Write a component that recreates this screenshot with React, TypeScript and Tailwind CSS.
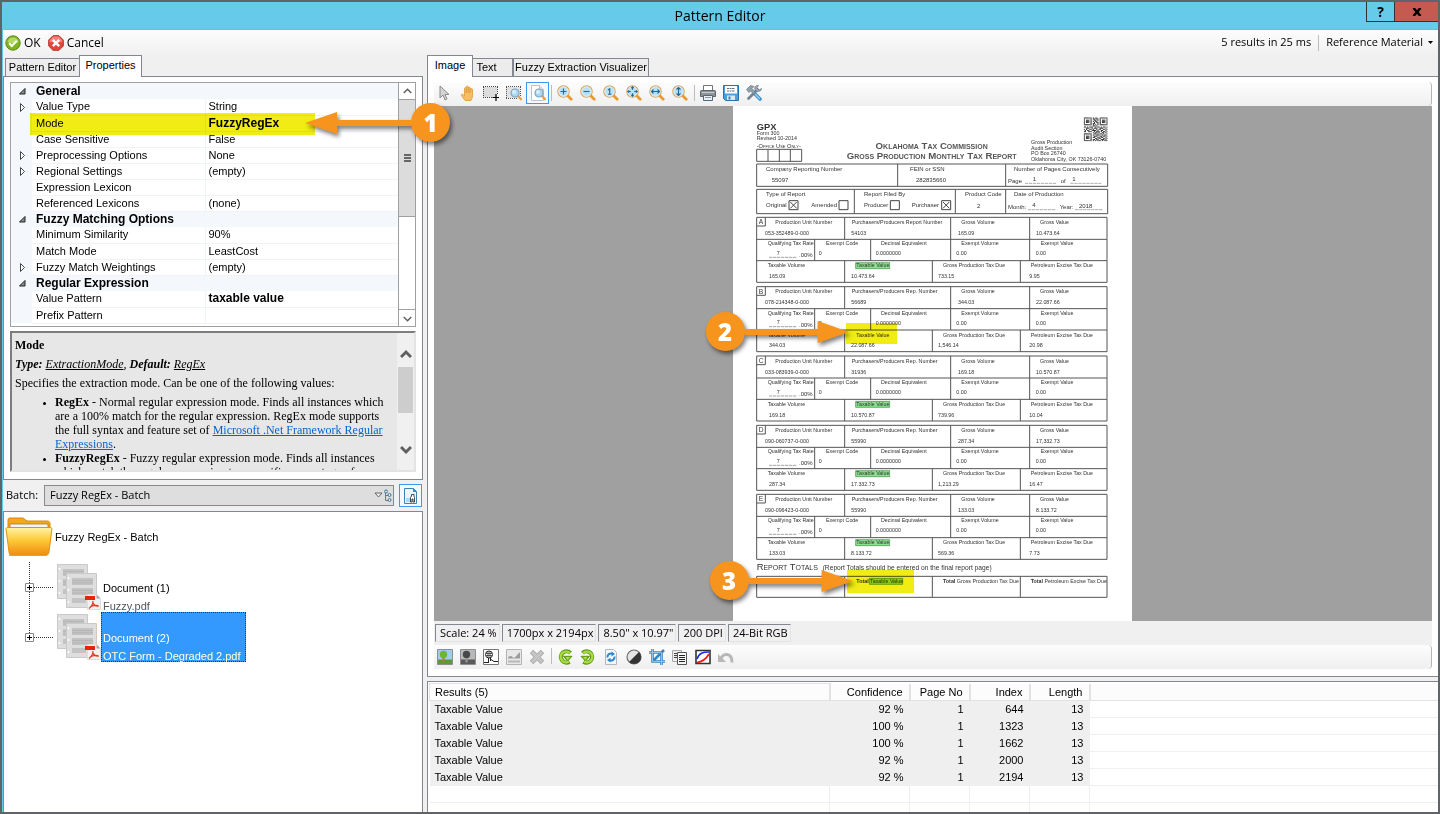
import type { ReactNode } from "react";
import { clsx } from "clsx";

type Property = {
    name: string;
    value?: string;
    kind?: "category" | "expandable";
    bold?: boolean;
};

const properties: Property[] = [
    { name: "General", kind: "category" },
    { name: "Value Type", value: "String", kind: "expandable" },
    { name: "Mode", value: "FuzzyRegEx", bold: true },
    { name: "Case Sensitive", value: "False" },
    { name: "Preprocessing Options", value: "None", kind: "expandable" },
    { name: "Regional Settings", value: "(empty)", kind: "expandable" },
    { name: "Expression Lexicon", value: "" },
    { name: "Referenced Lexicons", value: "(none)" },
    { name: "Fuzzy Matching Options", kind: "category" },
    { name: "Minimum Similarity", value: "90%" },
    { name: "Match Mode", value: "LeastCost" },
    { name: "Fuzzy Match Weightings", value: "(empty)", kind: "expandable" },
    { name: "Regular Expression", kind: "category" },
    { name: "Value Pattern", value: "taxable value", bold: true },
    { name: "Prefix Pattern", value: "" },
];

const results = [
    { confidence: "92 %", page: 1, index: 644, length: 13 },
    { confidence: "100 %", page: 1, index: 1323, length: 13 },
    { confidence: "100 %", page: 1, index: 1662, length: 13 },
    { confidence: "92 %", page: 1, index: 2000, length: 13 },
    { confidence: "92 %", page: 1, index: 2194, length: 13 },
];

const sections = [
    { id: "A", y: 334, purchaser: "Report", top: ["053-352489-0-000", "54103", "165.09", "10.473.64"], bottom: ["165.09", "10.473.64", "733.15", "9.95"] },
    { id: "B", y: 542, purchaser: "Rep.", top: ["078-214348-0-000", "56689", "344.03", "22.087.66"], bottom: ["344.03", "22.087.66", "1,546.14", "20.98"] },
    { id: "C", y: 750, purchaser: "Rep.", top: ["033-083939-0-000", "31936", "169.18", "10.570.87"], bottom: ["169.18", "10.570.87", "739.96", "10.04"] },
    { id: "D", y: 958, purchaser: "Rep.", top: ["090-060737-0-000", "55990", "287.34", "17,332.73"], bottom: ["287.34", "17.332.73", "1,213.29", "16.47"] },
    { id: "E", y: 1165, purchaser: "Rep.", top: ["090-096423-0-000", "55990", "133.03", "8.133.72"], bottom: ["133.03", "8.133.72", "569.36", "7.73"] },
];

const statusItems = ["Scale: 24 %", "1700px x 2194px", "8.50\" x 10.97\"", "200 DPI", "24-Bit RGB"];

/* ---------- icons ---------- */

function Icon({ children, size = "size-4" }: { children: ReactNode; size?: string }) {
    return (
        <svg viewBox="0 0 16 16" className={clsx("shrink-0", size)} fill="none" aria-hidden="true">
            {children}
        </svg>
    );
}

function OkIcon() {
    return (
        <Icon>
            <circle cx="8" cy="8" r="7.2" fill="#7fb51c" stroke="#5b8a1a" />
            <path d="M2.5 7a5.6 5.6 0 0 1 11 0c-3 1.6-8 1.6-11 0z" fill="#b2d962" />
            <path d="M4.2 8.2l2.6 2.7 5-5.2" stroke="#fff" strokeWidth="2.2" />
        </Icon>
    );
}

function CancelIcon() {
    return (
        <Icon>
            <path d="M5 .7h6L15.3 5v6L11 15.3H5L.7 11V5z" fill="#e4463b" stroke="#b8352b" />
            <path d="M5.2 1.5h5.6l3.4 3.7v2H1.8v-2z" fill="#f08478" />
            <path d="M4.800 4.800l6.400 6.400M11.200 4.800l-6.400 6.400" stroke="#fff" strokeWidth="2.4" />
        </Icon>
    );
}

function PointerIcon() {
    return (
        <Icon>
            <path d="M3 1v12l3-3 2 5 2-1-2-4.500h4z" fill="#d4d4d4" stroke="#8b8b8b" strokeWidth="1" />
        </Icon>
    );
}

function HandIcon() {
    return (
        <Icon>
            <path
                d="M5 15.500l-3.500-5c-.6-1 .6-1.800 1.400-1l1.600 1.500V3.500c0-1.200 1.700-1.200 1.800 0V2c0-1.200 1.800-1.200 1.900 0v1c.1-1.200 1.800-1.200 1.900 0v1.500c.1-1.200 2.300-1.200 2.400 0V10.500c0 2.500-1 3.500-1.500 5z"
                fill="#f6bd62"
                stroke="#dc9838"
                strokeWidth=".8"
            />
            <path d="M6.300 4v4M8.200 3v5M10.100 4v4" stroke="#d28a2e" strokeWidth=".7" />
        </Icon>
    );
}

function MarqueeIcon() {
    return (
        <Icon>
            <path d="M0 2h14v10H0z" fill="#dcdcdc" />
            <path d="M0 1.500h15M0 12.500h11M.5 2v10M14.500 2v7" stroke="#444" strokeDasharray="1 1" />
            <path d="M13 9v7M9.500 12.500h7" stroke="#000" strokeWidth="1.200" />
        </Icon>
    );
}

function Lens() {
    return (
        <>
            <path d="M12 11l3 3.200" stroke="#e9a04a" strokeWidth="2.400" strokeLinecap="round" />
            <circle cx="9" cy="8" r="4" fill="#a9d8f3" stroke="#7fa6bd" strokeWidth="1.200" />
            <circle cx="8" cy="7" r="2" fill="#d6eefb" />
        </>
    );
}

function ZoomRegionIcon() {
    return (
        <Icon>
            <path d="M0 2h14v11H0z" fill="#e2e2e2" />
            <path d="M0 1.500h15M0 13.500h11M.5 2v11M14.500 2v9" stroke="#555" strokeDasharray="1 1" />
            <Lens />
        </Icon>
    );
}

function ZoomPageIcon() {
    return (
        <Icon>
            <path d="M1.500.5h8l4 4v11h-12z" fill="#fff" stroke="#c0c0c0" />
            <path d="M9.500.5v4h4" fill="#e6e6e6" stroke="#c0c0c0" />
            <Lens />
        </Icon>
    );
}

function ZoomIcon({ glyph }: { glyph: string }) {
    return (
        <Icon>
            <path d="M11 11l3.200 3.200" stroke="#ea9a2c" strokeWidth="2.800" strokeLinecap="round" />
            <circle cx="6.500" cy="6.500" r="5.700" fill="#b4e1f7" stroke="#dfa04e" strokeWidth="1.100" />
            <circle cx="6.500" cy="6.500" r="4.700" stroke="#e6f6fd" strokeWidth=".8" />
            <path d={glyph} stroke="#2b6491" strokeWidth="1.100" />
        </Icon>
    );
}

const zoomGlyphs = [
    { label: "Zoom in", d: "M6.500 3.500v6M3.500 6.500h6" },
    { label: "Zoom out", d: "M3.500 6.500h6" },
    { label: "Actual size", d: "M5 5l1.700-1.200v5.700M5 9.300h3.400" },
    { label: "Fit page", d: "M6.500 1.800v3M5.300 3l1.200-1.200L7.700 3M6.500 8.200v3M5.300 10l1.200 1.200L7.700 10M1.800 6.500h3M3 5.300L1.800 6.500 3 7.700M8.200 6.500h3M10 5.300l1.200 1.200L10 7.700" },
    { label: "Fit width", d: "M2.500 6.500h8M4.500 4.500l-2 2 2 2M8.500 4.500l2 2-2 2" },
    { label: "Fit height", d: "M6.500 2.500v8M4.500 4.500l2-2 2 2M4.500 8.500l2 2 2-2" },
];

function PrinterIcon() {
    return (
        <Icon>
            <path d="M3.500.5h9v5h-9z" fill="#fff" stroke="#6d7580" />
            <path d="M1.500 5.500h13c.6 0 1 .4 1 1v5H.5v-5c0-.6.4-1 1-1z" fill="#8d949c" stroke="#5d646d" />
            <path d="M2 7.500h12" stroke="#c8ced4" />
            <path d="M3.500 10.500h9v5h-9z" fill="#e6f1fa" stroke="#5d646d" />
            <path d="M5 12.500h6" stroke="#6ea4d1" />
        </Icon>
    );
}

function SaveIcon() {
    return (
        <Icon>
            <path d="M.5.5h15v15h-13l-2-2z" fill="#4a9fdb" stroke="#2274b0" />
            <path d="M2 1h12v7.500H2z" fill="#fff" />
            <path d="M4 3.500h8M4 6h8" stroke="#64707a" strokeDasharray="2 .5" />
            <path d="M4 10.500h8v4.500H4z" fill="#dbe7ef" />
            <path d="M5.500 11.500h2v3h-2z" fill="#2e86c6" />
        </Icon>
    );
}

function ToolsIcon() {
    return (
        <Icon>
            <path d="M2.500 13.500l9-9" stroke="#73838f" strokeWidth="2.800" strokeLinecap="round" />
            <path d="M15.500 3.500l-2.600 1.600-2-2L12.500.5c-2.200-.4-4.200 1-3.800 3.300.3 1.700 2 3 3.700 2.700 2-.3 3.300-1.500 3.100-3z" fill="#9cabb7" stroke="#5d6c79" strokeWidth=".6" />
            <path d="M9.500 9.500l4.500 4.500" stroke="#3b94d4" strokeWidth="3.600" strokeLinecap="round" />
            <path d="M9.500 9.500l4 4" stroke="#9fd2f2" strokeWidth="1.200" strokeLinecap="round" />
            <path d="M.5 4.500L4.500.5l3.500 1L6 3.500l1 1L9.500 8 8 9.500 4.500 6 3 7.500z" fill="#8fa0ad" stroke="#5d6c79" strokeWidth=".6" />
        </Icon>
    );
}

function PictureIcon({ sky, ground, tree, trunk }: { sky: string; ground: string; tree: string; trunk: string }) {
    return (
        <Icon>
            <path d="M.5.5h15v15H.5z" fill={sky} stroke="#8a8f94" />
            <path d="M1 10.500h14V15H1z" fill={ground} />
            <path d="M5.500 8h2v5.500h-2z" fill={trunk} />
            <circle cx="6.500" cy="5.500" r="3.700" fill={tree} />
        </Icon>
    );
}

function BinaryPictureIcon() {
    return (
        <Icon>
            <path d="M.5.5h15v15H.5z" fill="#fff" stroke="#777" />
            <circle cx="6" cy="5.500" r="3.500" stroke="#222" />
            <path d="M3 4.500h6M3 6.500h6M5 2.500v6M7 2.500v6" stroke="#222" strokeWidth=".7" />
            <path d="M5.500 9v4M7.500 9v3M1 13.500h5M8 10.500l3 2h4" stroke="#222" />
        </Icon>
    );
}

function ThresholdIcon() {
    return (
        <Icon>
            <path d="M.5.5h15v15H.5z" fill="#e8e8e8" stroke="#b4b4b4" />
            <path d="M2 8.500c2-2 3-2 5 0s5-5 7-5v6H2z" fill="#9c9c9c" />
            <path d="M2 12.500h12" stroke="#b8b8b8" strokeWidth="2" />
        </Icon>
    );
}

function DeleteIcon() {
    return (
        <Icon>
            <path d="M2.500 2.500l11 11M13.500 2.500l-11 11" stroke="#a6a6a6" strokeWidth="4.800" />
            <path d="M3 3l10 10M13 3L3 13" stroke="#c4c4c4" strokeWidth="3.200" />
        </Icon>
    );
}

function RotateIcon({ flip = false }: { flip?: boolean }) {
    return (
        <Icon>
            <g transform={flip ? "translate(16 0) scale(-1 1)" : undefined}>
                <path d="M13.500 4A5.600 5.600 0 1 0 12.500 12.700" stroke="#5f9a12" strokeWidth="4.200" />
                <path d="M6.500 7.300h8.500L10.500 12z" fill="#5f9a12" stroke="#5f9a12" />
                <path d="M12.800 4.200A5.300 5.300 0 1 0 11.800 12.400" stroke="#a9dd42" strokeWidth="2.400" />
                <path d="M8.500 8h4.700l-2.700 2.900z" fill="#a9dd42" />
            </g>
        </Icon>
    );
}

function RefreshPageIcon() {
    return (
        <Icon>
            <path d="M2.500.5h8l3 3v12h-11z" fill="#f4f7fa" stroke="#b1b7bd" />
            <path d="M4.500 8.500a3.500 3.500 0 0 1 5-3.700M11.500 7.500a3.500 3.500 0 0 1-5 3.700" stroke="#2f86cc" strokeWidth="2" />
            <path d="M8.500 2.500l3.500 2.500-3.500 2.500zM7.500 8.700L4 11l3.500 2.500z" fill="#2f86cc" />
        </Icon>
    );
}

function ContrastIcon() {
    return (
        <Icon>
            <circle cx="8" cy="8" r="7" fill="#e4e4e4" stroke="#6d6d6d" strokeWidth="1.200" />
            <path d="M13 3a7 7 0 0 1-10 10z" fill="#333" />
        </Icon>
    );
}

function CropIcon() {
    return (
        <Icon>
            <path d="M3.500 0v12.500H16M0 3.500h12.500V16M5 11l10-10" stroke="#3a86c4" strokeWidth="2.600" />
            <path d="M3.500 0v12.500H16M0 3.500h12.500V16" stroke="#8cc3ea" strokeWidth="1" />
        </Icon>
    );
}

function CopyIcon() {
    return (
        <Icon>
            <path d="M.5 1.500h9v11h-9z" fill="#eee" stroke="#aaa" />
            <path d="M2 4.500h4M2 6.500h4M2 8.500h4" stroke="#444" />
            <path d="M5.500 3.500h9v12h-9z" fill="#f7f7f7" stroke="#555" />
            <path d="M7 6.500h6M7 8.500h6M7 10.500h6M7 12.500h6" stroke="#222" />
        </Icon>
    );
}

function CurveIcon() {
    return (
        <Icon>
            <path d="M1 1.500h14v13H1z" fill="#fff" stroke="#333" strokeWidth="1.600" />
            <path d="M2 10C4 4 8 3 14 3" stroke="#1530f0" strokeWidth="1.700" />
            <path d="M2 13.500C8 13 11 10 14 5" stroke="#f01515" strokeWidth="1.700" />
        </Icon>
    );
}

function UndoIcon() {
    return (
        <Icon>
            <path d="M3 9.500C5 4 14 3 14 13.500" stroke="#b8b8b8" strokeWidth="3" />
            <path d="M0 5v8h8z" fill="#b8b8b8" />
        </Icon>
    );
}

function FolderIcon() {
    return (
        <svg viewBox="0 0 48 40" className="h-10 w-12 shrink-0" fill="none" aria-hidden="true">
            <defs>
                <linearGradient id="folder" x1="0" y1="0" x2="0" y2="1">
                    <stop offset="0" stopColor="#fff3a6" />
                    <stop offset=".45" stopColor="#fccb3a" />
                    <stop offset="1" stopColor="#f28c0f" />
                </linearGradient>
            </defs>
            <path d="M4 38h38" stroke="#8a6a3a" strokeWidth="2" opacity=".5" />
            <path d="M3 10V3c0-1.500 1-2 2-2h13l4 3h20c2 0 3 1 3 3v4H3z" fill="#f6a81b" stroke="#d98709" />
            <path d="M5 7h38v4H5z" fill="#f4f4f4" stroke="#a87b31" strokeWidth=".8" />
            <path d="M1 12c0-1 .7-1.500 1.500-1.500h43c1 0 1.500.7 1.400 1.700L44 35c-.2 2-1 3-3 3H7c-2 0-2.800-1-3-3z" fill="url(#folder)" stroke="#e39212" />
        </svg>
    );
}

function DocumentsIcon() {
    const page = (x: number, y: number) => (
        <g transform={`translate(${x} ${y})`}>
            <path d="M.5.5h30v34H.5z" fill="#dedede" stroke="#c9c9c9" />
            <path d="M6 5h21v7H6zM6 15h21v7H6zM6 25h14v5H6z" fill="#c3c3c3" />
            <path d="M6 7.500h21M6 9.800h21M6 17.500h21M6 20h21" stroke="#b1b1b1" strokeWidth=".8" />
            <path d="M2.500 4v2M2.500 16v2M2.500 28v2" stroke="#fff" strokeWidth="1.500" />
        </g>
    );
    return (
        <svg viewBox="0 0 45 50" className="h-[50px] w-[45px] shrink-0" fill="none" aria-hidden="true">
            {page(1, 2)}
            {page(10, 11)}
            <path d="M31.500 32.500h9l4 4v11h-13z" fill="#f1f1f1" stroke="#ddd" />
            <path d="M40.500 32.500v4h4z" fill="#a5a5a5" />
            <path d="M29 34h10v4H29z" fill="#ea2208" />
            <path d="M37 39c0 3-2 6-4 7.500M37 41c1 2.500 3 3.500 6 3M34 45c2-1.500 5-2 8-1.500" stroke="#e33a22" strokeWidth="1.200" />
        </svg>
    );
}

/* ---------- small building blocks ---------- */

function ToolButton({ label, active = false, children }: { label: string; active?: boolean; children: ReactNode }) {
    return (
        <button
            type="button"
            aria-label={label}
            className={clsx(
                "flex h-[22px] w-[23px] items-center pl-[3px]",
                active && "border border-[#3f97ee] bg-[#f3f9ff] pl-[2px]"
            )}
        >
            {children}
        </button>
    );
}

function Separator() {
    return <span className="mx-[2px] mt-[3px] h-4 w-px self-start bg-[#bdbdbd]" />;
}

function Chevron({ down = false, heavy = false }: { down?: boolean; heavy?: boolean }) {
    return (
        <svg viewBox="0 0 12 12" className={heavy ? "size-3" : "size-[9px]"} fill="none" aria-hidden="true">
            <path d={down ? "M1 4l5 5 5-5" : "M1 8l5-5 5 5"} stroke="#606060" strokeWidth={heavy ? 3 : 2} />
        </svg>
    );
}

function Tab({ label, active = false, className }: { label: string; active?: boolean; className: string }) {
    return (
        <button
            type="button"
            role="tab"
            aria-selected={active}
            className={clsx(
                "border border-[#828790] border-b-0 whitespace-nowrap text-center",
                active ? "z-10 -mb-px h-[22px] bg-white pb-[2px]" : "h-[18px] bg-[#ececec]",
                className
            )}
        >
            {label}
        </button>
    );
}

function Callout({ number, pointsLeft = false, className }: { number: number; pointsLeft?: boolean; className: string }) {
    return (
        <div
            className={clsx(
                "pointer-events-none absolute z-20 flex items-center drop-shadow-[2px_3px_2px_rgba(0,0,0,0.5)]",
                pointsLeft && "flex-row-reverse",
                className
            )}
        >
            <span className="flex size-[39px] shrink-0 items-center justify-center rounded-full bg-[#f7941e] font-['Open_Sans'] text-2xl font-extrabold text-white">
                {number}
            </span>
            <svg viewBox="0 0 106 22" preserveAspectRatio="none" className={clsx("h-[22px] min-w-0 flex-1", pointsLeft && "-scale-x-100")} aria-hidden="true">
                <path d="M0 8h74V0l32 11-32 11v-8H0z" fill="#f7941e" />
            </svg>
        </div>
    );
}

/* ---------- left side ---------- */

function PropertyGrid() {
    return (
        <div className="relative flex h-[245px] border border-[#a0a0a0] bg-white">
            <div className="min-w-0 flex-1 overflow-hidden">
                <table className="w-full table-fixed">
                    <colgroup>
                        <col className="w-[21px]" />
                        <col className="w-[173px]" />
                        <col />
                    </colgroup>
                    <tbody>
                        {properties.map((p) => (
                            <tr key={p.name} className="h-4 leading-[15px]">
                                <td className="bg-[#f4f7fc] pl-[7px]">
                                    {p.kind && (
                                        <svg viewBox="0 0 9 9" className="size-[9px]" fill="none" aria-hidden="true">
                                            {p.kind === "category" ? (
                                                <path d="M7 1.500v5.500H1.500z" fill="#8a8a8a" stroke="#222" />
                                            ) : (
                                                <path d="M2.500.5v8l4-4z" fill="#fff" stroke="#444" />
                                            )}
                                        </svg>
                                    )}
                                </td>
                                {p.kind === "category" ? (
                                    <td colSpan={2} className="bg-[#f4f7fc] pl-1 text-xs leading-[15px] font-bold">{p.name}</td>
                                ) : (
                                    <>
                                        <td className="border-r border-b border-[#f0f4fa] pl-1">{p.name}</td>
                                        <td className={clsx("border-b border-[#f0f4fa] pl-[3px]", p.bold && "text-xs leading-[15px] font-bold")}>{p.value}</td>
                                    </>
                                )}
                            </tr>
                        ))}
                    </tbody>
                </table>
            </div>
            <div className="flex w-[17px] flex-col border-l border-[#a0a0a0]">
                <button type="button" aria-label="Scroll up" className="flex h-4 items-center justify-center">
                    <Chevron />
                </button>
                <div className="flex h-[118px] items-center justify-center border-y border-[#a0a0a0] bg-[#dcdcdc]">
                    <span className="h-2 w-[7px] border-y-2 border-[#666] bg-[linear-gradient(#dcdcdc_1px,#666_1px,#666_3px,#dcdcdc_3px)]" />
                </div>
                <div className="flex-1" />
                <button type="button" aria-label="Scroll down" className="flex h-[17px] items-center justify-center border-t border-[#a0a0a0]">
                    <Chevron down />
                </button>
            </div>
            <div className="pointer-events-none absolute top-[30px] left-[19px] h-[22px] w-[285px] bg-[#f0ec14] mix-blend-multiply" />
            <Callout number={1} pointsLeft className="top-[20px] left-[294px] w-[145px]" />
        </div>
    );
}

function HelpPane() {
    return (
        <div className="mt-1 flex h-[141px] border-2 border-t-[#7d7d7d] border-r-[#e3e3e3] border-b-[#e3e3e3] border-l-[#7d7d7d] bg-[#e7e7e7]">
            <div className="min-w-0 flex-1 overflow-hidden pt-[5px] pl-[3px] font-['Liberation_Serif',serif] text-xs leading-[14px]">
                <p className="font-bold">Mode</p>
                <p className="mt-[5px] italic">
                    <b>Type:</b> <a href="#extraction-mode" className="underline">ExtractionMode</a>, <b>Default:</b>{" "}
                    <a href="#regex" className="underline">RegEx</a>
                </p>
                <p className="mt-[5px]">Specifies the extraction mode. Can be one of the following values:</p>
                <ul className="mt-[5px] ml-10 list-disc pr-2 marker:text-[9px]">
                    <li>
                        <b>RegEx</b> - Normal regular expression mode. Finds all instances which are a 100% match for the regular
                        expression. RegEx mode supports the full syntax and feature set of{" "}
                        <a href="#dotnet" className="text-[#0a62cc] underline">Microsoft .Net Framework Regular Expressions</a>.
                    </li>
                    <li>
                        <b>FuzzyRegEx</b> - Fuzzy regular expression mode. Finds all instances which match the regular expression to a
                        specific percentage of similarity.
                    </li>
                </ul>
            </div>
            <div className="flex w-[17px] flex-col items-center bg-[#f0f0f0] pt-4">
                <Chevron heavy />
                <div className="mt-[6px] h-[46px] w-[15px] bg-[#cdcdcd]" />
                <div className="mt-[30px]">
                    <Chevron down heavy />
                </div>
            </div>
        </div>
    );
}

function BatchBar() {
    return (
        <div className="flex h-[31px] items-center pl-[3px] font-['Open_Sans'] text-[11px]">
            <label htmlFor="batch" className="w-[38px]">Batch:</label>
            <div className="relative flex-1">
                <select id="batch" className="h-[21px] w-full appearance-none border border-[#8a8a8a] bg-[#dedede] pl-[5px]">
                    <option>Fuzzy RegEx - Batch</option>
                </select>
                <svg viewBox="0 0 18 13" className="pointer-events-none absolute top-1 right-[2px] h-[13px] w-[18px]" fill="none" aria-hidden="true">
                    <path d="M1 4h7L4.500 8z" fill="#eee" stroke="#666" />
                    <path d="M11.500 3v8.500h3M11.500 6.500h3" stroke="#777" />
                    <circle cx="12" cy="2.500" r="1.500" fill="#d7ebf8" stroke="#41739a" />
                    <circle cx="15.500" cy="6" r="1.500" fill="#d7ebf8" stroke="#41739a" />
                    <circle cx="15.500" cy="11" r="1.500" fill="#d7ebf8" stroke="#41739a" />
                </svg>
            </div>
            <button type="button" aria-label="Browse batch" className="mr-px ml-[5px] flex size-[23px] items-center justify-center border border-[#3f97ee] bg-[#f5f9fd]">
                <Icon>
                    <path d="M1.500.5h9l3 3v12h-12z" fill="#eaf6fc" stroke="#3e83b5" />
                    <path d="M10.500.5v3h3" fill="#2e86c6" stroke="#2e86c6" />
                    <path d="M3 10h4v4H3z" fill="#a9d8f0" />
                    <path d="M7.500 14V9.500L8.500 8V6.500h2.500V8l.5 1.500V14H10v-3H9v3z" fill="#fff" stroke="#333" strokeWidth=".9" />
                </Icon>
            </button>
        </div>
    );
}

function TreeNode({ title, file, selected = false }: { title: string; file: string; selected?: boolean }) {
    return (
        <li className="flex h-[50px]">
            <button type="button" aria-label={`Expand ${title}`}>
                <svg viewBox="0 0 52 50" className="h-[50px] w-[52px]" fill="none" aria-hidden="true">
                    <path d={selected ? "M25.500 0v25" : "M25.500 0v50"} stroke="#333" strokeDasharray="1 1" />
                    <path d="M30 25.500h19" stroke="#333" strokeDasharray="1 1" />
                    <path d="M21.500 21.500h8v8h-8z" fill="#fff" stroke="#888" />
                    <path d="M23 25.500h5M25.500 23v5" stroke="#000" />
                </svg>
            </button>
            <DocumentsIcon />
            <div
                className={clsx(
                    "border border-dotted pt-4 pr-1 pl-px leading-[18px]",
                    selected ? "border-[#5a2a10] bg-[#3399ff] text-white" : "border-transparent"
                )}
            >
                <p>{title}</p>
                <p className={selected ? "text-[#ffffdc]" : "text-[#555]"}>{file}</p>
            </div>
        </li>
    );
}

function LeftSide() {
    return (
        <div className="flex w-[420px] shrink-0 flex-col">
            <div role="tablist" className="flex items-end pl-[2px]">
                <Tab label="Pattern Editor" className="w-[75px]" />
                <Tab label="Properties" active className="-ml-px w-[63px]" />
            </div>
            <div className="h-[404px] border border-[#828790] bg-white px-[6px] pt-[5px]">
                <PropertyGrid />
                <HelpPane />
            </div>
            <BatchBar />
            <ul className="flex-1 border border-b-0 border-[#828790] bg-white">
                <li className="flex h-[50px] items-center pl-px">
                    <FolderIcon />
                    <span className="pl-[2px]">Fuzzy RegEx - Batch</span>
                </li>
                <TreeNode title="Document (1)" file="Fuzzy.pdf" />
                <TreeNode title="Document (2)" file="OTC Form - Degraded 2.pdf" selected />
            </ul>
        </div>
    );
}

/* ---------- scanned form, drawn in its own 1197 x 1545 units ---------- */

const qrRows = [
    "111111101011001111111",
    "100000101101101000001",
    "101110100110101011101",
    "101110101011001011101",
    "101110100101101011101",
    "100000101100101000001",
    "111111101010101111111",
    "000000001101000000000",
    "110101110010110101101",
    "001110010111001110010",
    "101001101001011001101",
    "010110011110100110010",
    "110011100101110101101",
    "000000001011010011010",
    "111111100110101101001",
    "100000101001110010110",
    "101110100111001101101",
    "101110101100110110010",
    "101110100011011001101",
    "100000101101100111010",
    "111111101010111010111",
];

function Section({ id, y, purchaser, top, bottom }: (typeof sections)[number]) {
    return (
        <g transform={`translate(0 ${y})`}>
            <path
                d="M71 0h1051v195H71zM71 66h1051M71 130h1051M335 0v66M653 0v130M890 0v130M245 66v64M413 66v64M335 130v65M598 130v65M862 130v65M71 26h26V0"
                fill="none"
                stroke="#555"
                strokeWidth="3"
            />
            <text x="77" y="21" fontSize="20">{id}</text>
            <text x="127" y="20">Production Unit Number</text>
            <text x="356" y="20">Purchasers/Producers {purchaser} Number</text>
            <text x="685" y="20">Gross Volume</text>
            <text x="921" y="20">Gross Value</text>
            <text x="96" y="53">{top[0]}</text>
            <text x="355" y="53">{top[1]}</text>
            <text x="675" y="53">{top[2]}</text>
            <text x="909" y="53">{top[3]}</text>
            <text x="104" y="84">Qualifying Tax Rate</text>
            <text x="279" y="84">Exempt Code</text>
            <text x="444" y="84">Decimal Equivalent</text>
            <text x="685" y="84">Exempt Volume</text>
            <text x="923" y="84">Exempt Value</text>
            <text x="131" y="113">7</text>
            <path d="M108 120h84" stroke="#777" strokeWidth="2" strokeDasharray="10 2" />
            <text x="198" y="120" fontSize="18">.00%</text>
            <text x="257" y="114">0</text>
            <text x="428" y="114">0.0000000</text>
            <text x="670" y="114">0.00</text>
            <text x="908" y="114">0.00</text>
            {id !== "B" && <path d="M368 136h102v18H368z" fill="#8be28f" stroke="#3f8a43" strokeWidth="2" />}
            <text x="104" y="150">Taxable Volume</text>
            <text x="370" y="150">Taxable Value</text>
            <text x="630" y="150">Gross Production Tax Due</text>
            <text x="893" y="150">Petroleum Excise Tax Due</text>
            <text x="108" y="182">{bottom[0]}</text>
            <text x="354" y="182">{bottom[1]}</text>
            <text x="615" y="182">{bottom[2]}</text>
            <text x="889" y="182">{bottom[3]}</text>
        </g>
    );
}

function ScannedForm() {
    return (
        <svg viewBox="0 0 1197 1545" className="block w-[399px] bg-white" fontFamily="Liberation Sans, sans-serif" fontSize="16" fill="#333" role="img" aria-label="Gross production monthly tax report">
            <text x="71" y="72" fontSize="28" fontWeight="bold">GPX</text>
            <text x="71" y="88">Form 300</text>
            <text x="71" y="103">Revised 10-2014</text>
            <text x="71" y="126" fontSize="17" className="[font-variant:small-caps]">-Office Use Only-</text>
            <path d="M71 130h135v36H71zM105 130v36M139 130v36M172 130v36" fill="none" stroke="#555" strokeWidth="3" />
            <text x="596" y="128" textAnchor="middle" fontSize="29" fontWeight="bold" fill="#555" className="[font-variant:small-caps]">Oklahoma Tax Commission</text>
            <text x="596" y="158" textAnchor="middle" fontSize="29" fontWeight="bold" fill="#555" className="[font-variant:small-caps]">Gross Production Monthly Tax Report</text>
            <text x="894" y="114">Gross Production</text>
            <text x="894" y="131">Audit Section</text>
            <text x="894" y="148">PO Box 26740</text>
            <text x="894" y="164">Oklahoma City, OK 73126-0740</text>
            <svg x="1052" y="34" width="72" height="72" viewBox="0 0 21 21">
                {qrRows.map((row, y) =>
                    row.split("").map((bit, x) => (bit === "1" ? <rect key={`${x}-${y}`} x={x} y={y} width="1" height="1" fill="#333" /> : null))
                )}
            </svg>

            <path d="M71 174h1053v67H71zM494 174v67M818 174v67M71 250h1053v73H71zM364 250v73M667 250v73M818 250v73" fill="none" stroke="#555" strokeWidth="3" />
            <g fontSize="18">
                <text x="99" y="194">Company Reporting Number</text>
                <text x="531" y="194">FEIN or SSN</text>
                <text x="843" y="194">Number of Pages Consecutively</text>
                <text x="116" y="227">55097</text>
                <text x="549" y="227">282835660</text>
                <text x="825" y="231">Page</text>
                <text x="899" y="226">1</text>
                <text x="983" y="231">of</text>
                <text x="1018" y="226">1</text>
                <text x="99" y="269">Type of Report</text>
                <text x="393" y="269">Report Filed By</text>
                <text x="696" y="269">Product Code</text>
                <text x="843" y="269">Date of Production</text>
                <text x="99" y="304">Original</text>
                <text x="235" y="304">Amended</text>
                <text x="393" y="304">Producer</text>
                <text x="536" y="304">Purchaser</text>
                <text x="732" y="305">2</text>
                <text x="825" y="310">Month:</text>
                <text x="898" y="303">4</text>
                <text x="980" y="310">Year:</text>
                <text x="1038" y="306">2018</text>
            </g>
            <path
                d="M168 284h27v27h-27zM318 284h27v27h-27zM472 284h27v27h-27zM626 284h27v27h-27zM172 288l19 19M191 288l-19 19M630 288l19 19M649 288l-19 19"
                fill="none"
                stroke="#444"
                strokeWidth="3"
            />
            <path d="M876 232h93M1012 232h93M885 311h84M1026 311h84" stroke="#888" strokeWidth="2" strokeDasharray="10 2" />

            {sections.map((s) => (
                <Section key={s.id} {...s} />
            ))}

            <text x="71" y="1393" fontSize="28" className="[font-variant:small-caps]">Report Totals</text>
            <text x="269" y="1393" fontSize="20">(Report Totals should be entered on the final report page)</text>
            <path d="M71 1411h1051v63H71zM335 1411v63M598 1411v63M862 1411v63" fill="none" stroke="#555" strokeWidth="3" />
            <path d="M409 1417h100v18H409z" fill="#8be28f" stroke="#3f8a43" strokeWidth="2" />
            <text x="104" y="1431"><tspan fontWeight="bold">Total</tspan> Taxable Volume</text>
            <text x="370" y="1431"><tspan fontWeight="bold">Total</tspan> Taxable Value</text>
            <text x="630" y="1431"><tspan fontWeight="bold">Total</tspan> Gross Production Tax Due</text>
            <text x="893" y="1431"><tspan fontWeight="bold">Total</tspan> Petroleum Excise Tax Due</text>
        </svg>
    );
}

/* ---------- right side ---------- */

function Viewer() {
    return (
        <div className="flex justify-center overflow-hidden bg-[#a0a0a0] pr-[2px]">
            <div className="relative w-[399px]">
                <ScannedForm />
                <div className="absolute top-[217px] left-[113px] h-[21px] w-[51px] bg-[#f0ec14] mix-blend-multiply" />
                <div className="absolute top-[464px] left-[114px] h-[23px] w-[67px] bg-[#f0ec14] mix-blend-multiply" />
                <Callout number={2} className="top-[206px] -left-[27px] w-[143px]" />
                <Callout number={3} className="top-[455px] -left-[23px] w-[143px]" />
            </div>
        </div>
    );
}

function ViewerToolbar() {
    return (
        <div className="flex h-6 items-start rounded-r border-r border-[#b5b5b5] bg-linear-to-b from-[#fdfdfd] to-[#efefef]">
            <ToolButton label="Select"><PointerIcon /></ToolButton>
            <ToolButton label="Pan"><HandIcon /></ToolButton>
            <ToolButton label="Select region"><MarqueeIcon /></ToolButton>
            <ToolButton label="Zoom to region"><ZoomRegionIcon /></ToolButton>
            <ToolButton label="Magnify page" active><ZoomPageIcon /></ToolButton>
            <Separator />
            {zoomGlyphs.map((z) => (
                <ToolButton key={z.label} label={z.label}><ZoomIcon glyph={z.d} /></ToolButton>
            ))}
            <Separator />
            <ToolButton label="Print"><PrinterIcon /></ToolButton>
            <ToolButton label="Save"><SaveIcon /></ToolButton>
            <ToolButton label="Settings"><ToolsIcon /></ToolButton>
        </div>
    );
}

function StatusBar() {
    return (
        <div className="flex h-6 items-center gap-[2px] bg-[#f0f0f0] pl-px font-['Open_Sans'] text-[11px]">
            {statusItems.map((item) => (
                <span key={item} className="h-[18px] border-t border-r border-b border-l border-t-[#828790] border-r-[#e3e3e3] border-b-[#e3e3e3] border-l-[#828790] pr-[2px] pl-1 leading-4 whitespace-nowrap">
                    {item}
                </span>
            ))}
        </div>
    );
}

function ImageToolbar() {
    return (
        <div className="flex h-6 items-center rounded-r border-r border-[#b5b5b5] bg-linear-to-b from-[#fdfdfd] to-[#efefef]">
            <ToolButton label="Colour"><PictureIcon sky="#9fcdf0" ground="#5c9a36" tree="#6fb52f" trunk="#b9763a" /></ToolButton>
            <ToolButton label="Greyscale"><PictureIcon sky="#b8b8b8" ground="#5a5a5a" tree="#484848" trunk="#9a9a9a" /></ToolButton>
            <ToolButton label="Black and white"><BinaryPictureIcon /></ToolButton>
            <ToolButton label="Threshold"><ThresholdIcon /></ToolButton>
            <ToolButton label="Delete"><DeleteIcon /></ToolButton>
            <Separator />
            <ToolButton label="Rotate left"><RotateIcon /></ToolButton>
            <ToolButton label="Rotate right"><RotateIcon flip /></ToolButton>
            <ToolButton label="Reload page"><RefreshPageIcon /></ToolButton>
            <ToolButton label="Contrast"><ContrastIcon /></ToolButton>
            <ToolButton label="Crop"><CropIcon /></ToolButton>
            <ToolButton label="Copy"><CopyIcon /></ToolButton>
            <ToolButton label="Curves"><CurveIcon /></ToolButton>
            <ToolButton label="Undo"><UndoIcon /></ToolButton>
        </div>
    );
}

function ResultsPane() {
    const head = "border-r-2 border-b border-[#e2e2e2] pr-[6px] text-right font-normal";
    const cell = "bg-[#efefef] pr-[6px] text-right";
    return (
        <div className="mt-1 flex-1 overflow-hidden border border-r-0 border-b-0 border-[#828790] bg-white pt-px pl-px">
            <table className="w-full table-fixed leading-4">
                <colgroup>
                    <col className="w-[400px]" />
                    <col className="w-[80px]" />
                    <col className="w-[60px]" />
                    <col className="w-[60px]" />
                    <col className="w-[60px]" />
                    <col />
                </colgroup>
                <thead className="bg-[#fcfcfc]">
                    <tr className="h-[17px]">
                        <th className="border border-r-2 border-[#e2e2e2] pl-[5px] text-left font-normal">Results (5)</th>
                        <th className={head}>Confidence</th>
                        <th className={head}>Page No</th>
                        <th className={head}>Index</th>
                        <th className={head}>Length</th>
                        <th className="border-b border-[#e2e2e2]" />
                    </tr>
                </thead>
                <tbody>
                    {results.map((r) => (
                        <tr key={r.index} className="h-[17px]">
                            <td className="bg-[#efefef] pl-[5px]">Taxable Value</td>
                            <td className={cell}>{r.confidence}</td>
                            <td className={cell}>{r.page}</td>
                            <td className={cell}>{r.index}</td>
                            <td className={cell}>{r.length}</td>
                            <td className="border-b border-[#efefef]" />
                        </tr>
                    ))}
                    {["first", "second"].map((key) => (
                        <tr key={key} className="h-[17px]">
                            {[0, 1, 2, 3, 4].map((c) => (
                                <td key={c} className="border-r border-b border-[#efefef]" />
                            ))}
                            <td className="border-b border-[#efefef]" />
                        </tr>
                    ))}
                </tbody>
            </table>
        </div>
    );
}

function RightSide() {
    return (
        <div className="flex min-w-0 flex-1 flex-col">
            <div role="tablist" className="flex items-end">
                <Tab label="Image" active className="w-[46px]" />
                <Tab label="Text" className="w-10 border-l-0 pr-3" />
                <Tab label="Fuzzy Extraction Visualizer" className="w-[136px]" />
            </div>
            <div className="h-[601px] border border-r-0 border-[#828790] bg-white pt-[5px] pr-[6px] pl-[6px]">
                <ViewerToolbar />
                <Viewer />
                <StatusBar />
                <ImageToolbar />
            </div>
            <ResultsPane />
        </div>
    );
}

export default function App() {
    return (
        <div className="flex h-screen flex-col overflow-hidden border-2 border-[#606368] bg-[#f0f0f0] font-['Liberation_Sans',sans-serif] text-[11px] text-black">
            <header className="flex h-7 shrink-0 items-start border-b border-[#86b4c8] bg-[#66caea]">
                <span className="w-[72px]" />
                <h1 className="flex-1 text-center font-['Open_Sans'] text-sm leading-[28px]">Pattern Editor</h1>
                <button type="button" aria-label="Help" className="h-5 w-[29px] border border-t-0 border-[#333] font-['Open_Sans'] text-sm leading-[18px] font-bold">?</button>
                <button type="button" aria-label="Close" className="flex h-5 w-[43px] items-center justify-center border-b border-[#333] bg-[#c45a50]">
                    <svg viewBox="0 0 10 8" className="h-2 w-[10px]" aria-hidden="true">
                        <path d="M1.500 0l7 8M8.500 0l-7 8" stroke="#000" strokeWidth="2.500" />
                    </svg>
                </button>
            </header>
            <div className="flex min-h-0 flex-1 flex-col border-l border-[#66caea]">
                <div className="flex h-[25px] shrink-0 items-center bg-linear-to-b from-[#fdfdfd] to-[#f0f0f0] pl-[2px] font-['Open_Sans'] text-xs">
                    <button type="button" className="flex items-center gap-[3px]"><OkIcon />OK</button>
                    <button type="button" className="ml-[7px] flex items-center gap-[3px]"><CancelIcon />Cancel</button>
                    <span className="ml-auto text-[11px]">5 results in 25 ms</span>
                    <span className="mx-[7px] h-4 w-px bg-[#bdbdbd]" />
                    <button type="button" className="flex items-center text-[11px]">
                        Reference Material
                        <svg viewBox="0 0 5 3" className="mx-[5px] h-[3px] w-[5px]" aria-hidden="true">
                            <path d="M0 0h5L2.500 3z" />
                        </svg>
                    </button>
                </div>
                <div className="flex min-h-0 flex-1 gap-1">
                    <LeftSide />
                    <RightSide />
                </div>
            </div>
        </div>
    );
}
